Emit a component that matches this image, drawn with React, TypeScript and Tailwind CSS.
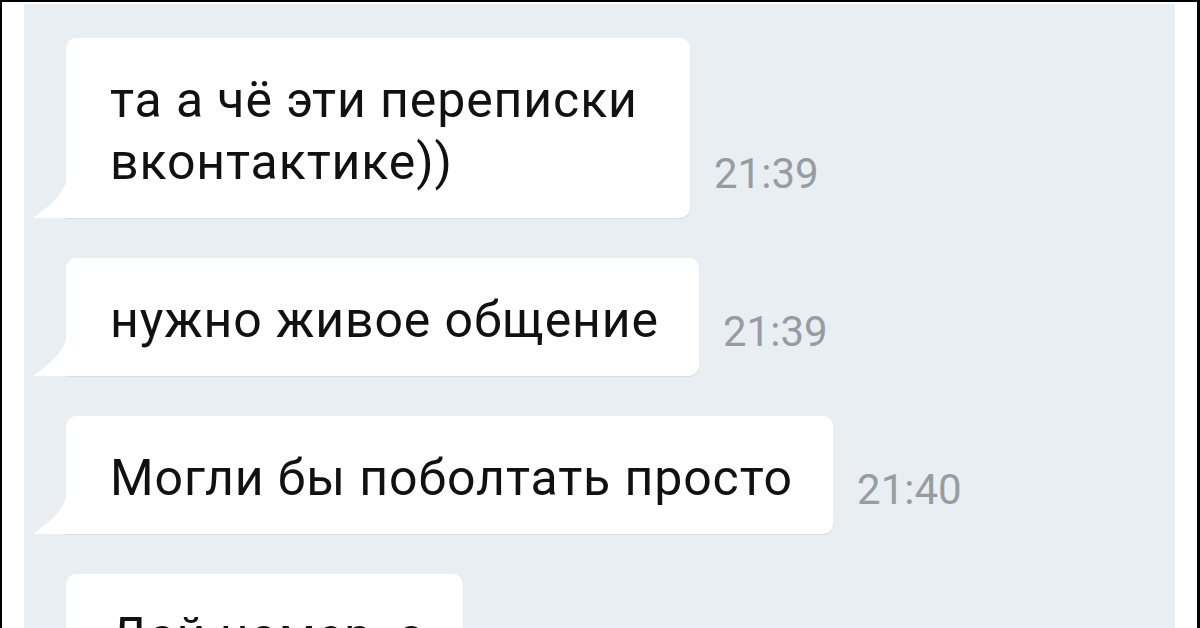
const messages = [
  { lines: ["та а чё эти переписки", "вконтактике))"], time: "21:39", width: "w-[624px]" },
  { lines: ["нужно живое общение"], time: "21:39", width: "" },
  { lines: ["Могли бы поболтать просто"], time: "21:40", width: "" },
  { lines: ["Дай номер, с", "тобой"], time: "21:40", width: "w-[397px]" },
];

const Tail = () => (
  <svg
    className="absolute -left-[33px] bottom-0"
    width="34"
    height="44"
    viewBox="0 0 34 44"
  >
    <path d="M34 0 C34 16 22 28 0 44 L34 44 Z" fill="#ffffff" />
  </svg>
);

const Bubble = ({ lines, time, width }: { lines: string[]; time: string; width: string }) => (
  <div className="flex items-end gap-[24px]">
    <div
      className={`relative shrink-0 rounded-[10px] rounded-bl-none bg-white pl-[44px] pr-[40px] pt-[31px] pb-[25px] shadow-[0_1px_1px_rgba(60,80,110,0.12)] ${width}`}
    >
      <Tail />
      {lines.map((l) => (
        <div
          key={l}
          className="whitespace-nowrap text-[50px] leading-[62px] tracking-[0.9px] text-[#111111]"
        >
          {l}
        </div>
      ))}
    </div>
    <span className="mb-[20px] text-[42px] leading-[48px] text-[#979ca3]">{time}</span>
  </div>
);

export default function App() {
  return (
    <div
      className="h-[628px] w-[1200px] overflow-hidden border-l-2 border-r-[3px] border-t-2 border-black bg-white pl-[22px] pr-[22px] pt-[2px]"
      style={{ fontFamily: "Roboto, 'Noto Sans', sans-serif" }}
    >
      <div className="flex h-[700px] flex-col gap-[40px] bg-[#e9eef3] pl-[42px] pt-[34px]">
        {messages.map((m, i) => (
          <Bubble key={i} {...m} />
        ))}
      </div>
    </div>
  );
}
